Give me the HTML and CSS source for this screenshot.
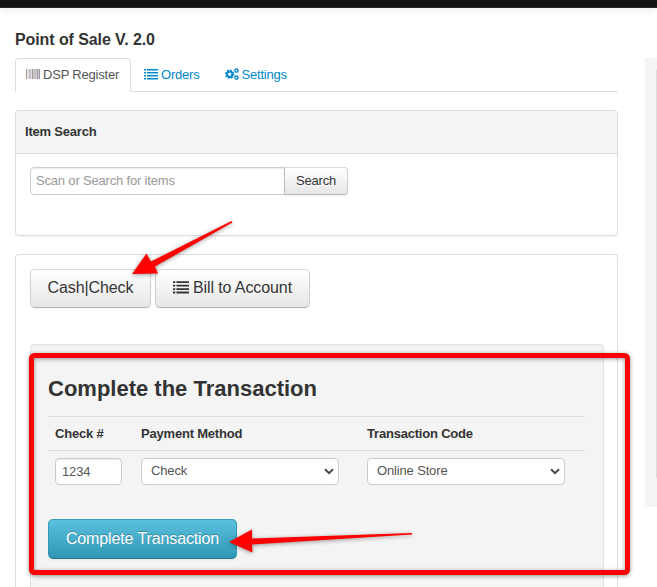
FILE: index.html
```html
<!DOCTYPE html>
<html lang="en">
<head>
<meta charset="utf-8">
<title>Point of Sale</title>
<link rel="stylesheet" href="styles.css">
</head>
<body>
<svg class="defs" width="0" height="0" aria-hidden="true">
  <symbol id="list" viewBox="0 0 14 12"><path d="M0 1h2v1.600H0zM3 1h11v1.600H3zM0 4h2v1.600H0zM3 4h11v1.600H3zM0 7h2v1.600H0zM3 7h11v1.600H3zM0 10h2v1.600H0zM3 10h11v1.600H3z"/></symbol>
</svg>
<div class="navbar"></div>
<div class="page">
  <main class="main">
    <h1 class="title">Point of Sale V. 2.0</h1>
    <nav class="tabs">
      <a class="tab tab-active"><svg class="icon" viewBox="0 0 14 12"><path fill="#a89a92" d="M0 1h1v10H0zM6 1h1v10H6zM11 1h1v10h-1z"/><path fill="#c3c0c3" d="M1.500 1h1v10h-1zM4 1h1.500v10H4zM8 1h2v10H8z"/><path fill="#9894aa" d="M3 1h.6v10H3zM7.200 1h.5v10h-.5zM10.300 1h.5v10h-.5zM12.500 1H14v10h-1.500z"/></svg><span>DSP Register</span></a>
      <a class="tab tab-orders"><svg class="icon"><use href="#list"/></svg><span>Orders</span></a>
      <a class="tab tab-settings"><svg class="icon" viewBox="0 0 14 12"><g fill="none" stroke="currentColor"><circle cx="4.700" cy="6.200" r="2.700" stroke-width="2"/><circle cx="4.700" cy="6.200" r="4" stroke-width="1.500" stroke-dasharray="1.570 1.570"/><circle cx="11.400" cy="2.600" r="1.500" stroke-width="1.200"/><circle cx="11.400" cy="2.600" r="2.200" stroke-width=".8" stroke-dasharray="1 .97"/><circle cx="11.400" cy="9.600" r="1.500" stroke-width="1.200"/><circle cx="11.400" cy="9.600" r="2.200" stroke-width=".8" stroke-dasharray="1 .97"/></g></svg><span>Settings</span></a>
    </nav>
    <section class="panel search-panel">
      <h2 class="panel-head">Item Search</h2>
      <div class="search-row">
        <input class="search-input" type="text" placeholder="Scan or Search for items"><button class="btn btn-search">Search</button>
      </div>
    </section>
    <section class="panel register">
      <div class="actions">
        <button class="btn btn-large btn-cash"><span>Cash|Check</span></button>
        <button class="btn btn-large btn-bill"><svg class="icon icon-large"><use href="#list"/></svg><span>Bill to Account</span></button>
      </div>
      <div class="well">
        <h3 class="well-title">Complete the Transaction</h3>
        <div class="grid grid-head"><span>Check #</span><span>Payment Method</span><span>Transaction Code</span></div>
        <div class="grid grid-body">
          <input class="field check-no" type="text" value="1234">
          <div class="field select"><span>Check</span><svg class="chevron" viewBox="0 0 10 7"><path d="M1 1.300 5 5.200 9 1.300"/></svg></div>
          <div class="field select"><span>Online Store</span><svg class="chevron" viewBox="0 0 10 7"><path d="M1 1.300 5 5.200 9 1.300"/></svg></div>
        </div>
        <button class="btn btn-complete">Complete Transaction</button>
      </div>
    </section>
  </main>
  <aside class="sidebar"><div class="sidebar-card"></div></aside>
</div>
<svg class="annotations" viewBox="0 0 657 587" aria-hidden="true">
  <rect x="31.500" y="355.500" width="596" height="217" rx="3" fill="none" stroke="#f00" stroke-width="5"/>
  <path fill="#f00" d="M132 274 146.500 253.500 151 261.500 231.500 221 232.500 222.500 155 266.500 158 273.500z"/>
  <path fill="#f00" d="M229 542 252 529.500 252 538.500 412 533 412 534.500 252 544.500 252.500 552.500z"/>
</svg>
</body>
</html>
```
FILE: styles.css
```css
* { box-sizing: border-box; }
body {
  margin: 0;
  height: 587px;
  overflow: hidden;
  background: #fff;
  color: #333;
  font: 13px/20px "Liberation Sans", Arial, sans-serif;
}
h1, h2, h3 { margin: 0; }
input, button { font-family: inherit; margin: 0; }
.defs { display: none; }
.navbar {
  height: 8px;
  background: #131313;
  border-bottom: 1px solid #252525;
  box-shadow: 0 1px 10px rgba(0, 0, 0, .1);
}
.page {
  display: grid;
  grid-template-columns: 603px 12px;
  column-gap: 27px;
  height: 579px;
  padding-left: 15px;
}
.main {
  display: flex;
  flex-direction: column;
  min-height: 0;
}
.title {
  flex: none;
  margin-top: 22px;
  height: 28px;
  font-size: 16px;
  line-height: 20px;
  letter-spacing: -.09px;
  white-space: nowrap;
}
.tabs {
  display: flex;
  flex: none;
  height: 34px;
  border-bottom: 1px solid #ddd;
  letter-spacing: -.2px;
}
.tab {
  display: flex;
  align-items: center;
  gap: 3px;
  height: 34px;
  padding-bottom: 1px;
  color: #08c;
  white-space: nowrap;
}
.tab-active {
  width: 116px;
  padding-left: 10px;
  border: 1px solid #ddd;
  border-bottom-color: #fff;
  border-radius: 4px 4px 0 0;
  color: #555;
  background: #fff;
}
.tab-orders { padding-left: 13px; }
.tab-settings { padding-left: 25px; }
.icon { width: 14px; height: 12px; fill: currentColor; flex: none; margin-top: -1px; }
.panel {
  border: 1px solid #ddd;
  border-radius: 4px;
  background: #fff;
}
.search-panel {
  flex: none;
  height: 126px;
  margin-top: 18px;
  box-shadow: 0 1px 1px rgba(0, 0, 0, .05);
}
.panel-head {
  height: 43px;
  padding-left: 9px;
  border-bottom: 1px solid #ddd;
  border-radius: 3px 3px 0 0;
  background: #f4f4f4;
  font-size: 13px;
  line-height: 42px;
  letter-spacing: -.2px;
}
.search-row { display: flex; padding: 13px 14px; }
.search-input {
  width: 255px;
  height: 28px;
  padding: 0 5px 2px;
  border: 1px solid #ccc;
  border-radius: 4px 0 0 4px;
  font-size: 13px;
  letter-spacing: -.18px;
  box-shadow: inset 0 1px 1px rgba(0, 0, 0, .075);
}
.search-input::placeholder { color: #999; opacity: 1; }
.btn {
  border: 1px solid #ccc;
  border-color: #d9d9d9 #d0d0d0 #b3b3b3;
  border-radius: 4px;
  padding: 0;
  color: #333;
  background: linear-gradient(#fff, #e6e6e6);
  box-shadow: 0 1px 2px rgba(0, 0, 0, .05);
  text-shadow: 0 1px 1px rgba(255, 255, 255, .75);
  white-space: nowrap;
}
.btn-search {
  width: 64px;
  height: 28px;
  margin-left: -1px;
  padding-bottom: 2px;
  border-left-color: #bbb;
  border-radius: 0 4px 4px 0;
  font-size: 13px;
  letter-spacing: -.2px;
}
.register {
  flex: 1;
  min-height: 0;
  margin-top: 18px;
  padding: 14px 14px 0;
  border-bottom: 0;
  border-radius: 4px 4px 0 0;
  display: flex;
  flex-direction: column;
}
.actions { display: flex; flex: none; gap: 4px; }
.btn-large {
  display: flex;
  align-items: center;
  justify-content: center;
  gap: 4px;
  height: 39px;
  padding-bottom: 2px;
  border-radius: 5px;
  font-size: 16px;
  letter-spacing: -.1px;
}
.btn-cash { width: 121px; }
.btn-bill { width: 155px; }
.icon-large { width: 16px; height: 14px; margin-top: -2px; }
.well {
  flex: 1;
  min-height: 0;
  width: 574px;
  margin-top: 36px;
  padding: 0 18px 0 17px;
  border: 1px solid #e3e3e3;
  border-bottom: 0;
  border-radius: 4px 4px 0 0;
  background: #f4f4f4;
  box-shadow: inset 0 1px 1px rgba(0, 0, 0, .05);
}
.well-title {
  height: 71px;
  padding-top: 30px;
  font-size: 22px;
  line-height: 28px;
  white-space: nowrap;
}
.grid {
  display: grid;
  grid-template-columns: 86px 226px 198px;
  border-top: 1px solid #ddd;
  padding-left: 7px;
}
.grid-head {
  height: 34px;
  font-weight: bold;
  line-height: 34px;
  letter-spacing: -.2px;
}
.grid-body { height: 69px; padding-top: 7px; }
.field {
  width: 198px;
  height: 27px;
  border: 1px solid #ccc;
  border-radius: 4px;
  background: #fff;
  color: #555;
  font-size: 13px;
  letter-spacing: -.15px;
}
.check-no {
  width: 67px;
  padding: 0 6px;
  box-shadow: inset 0 1px 1px rgba(0, 0, 0, .075);
}
.select {
  display: flex;
  align-items: center;
  justify-content: space-between;
  padding: 0 4px 1px 9px;
}
.chevron { width: 10px; height: 7px; margin-top: 1px; fill: none; stroke: #484848; stroke-width: 2; }
.btn-complete {
  width: 189px;
  height: 40px;
  border-color: #3a9dbc #2f96b4 #24748c;
  border-radius: 5px;
  background: linear-gradient(#5bc0de, #2f96b4);
  color: #fff;
  font-size: 16px;
  letter-spacing: -.12px;
  text-shadow: 0 -1px 0 rgba(0, 0, 0, .25);
}
.sidebar {
  height: 449px;
  margin-top: 50px;
  padding: 12px 0 0 11px;
  background: #f4f4f4;
}
.sidebar-card {
  width: 1px;
  height: 408px;
  border-left: 1px solid #ddd;
}
.annotations {
  position: absolute;
  inset: 0;
  width: 657px;
  height: 587px;
  pointer-events: none;
  filter: drop-shadow(0 1px 2px rgba(0, 0, 0, .4));
}
```
